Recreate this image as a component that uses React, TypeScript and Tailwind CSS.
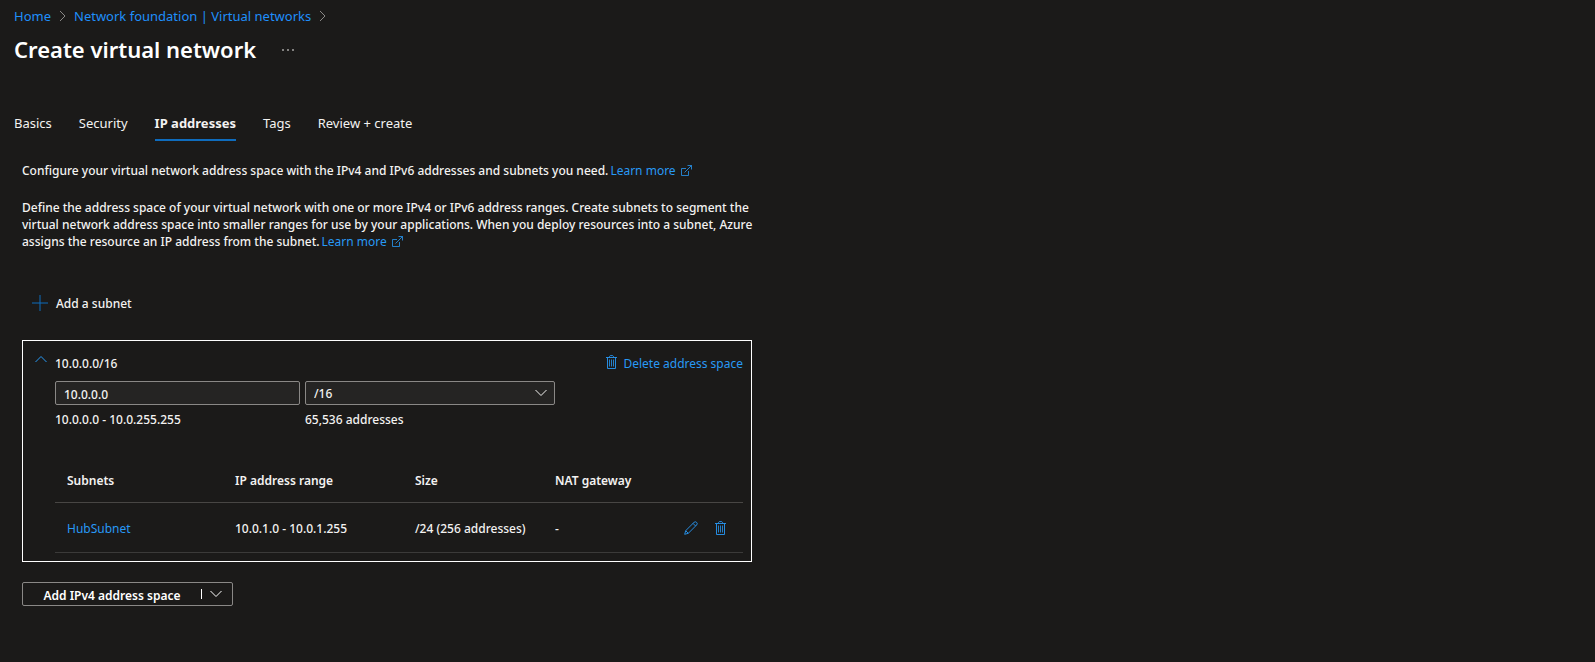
import React from "react";

const stroke = {
  fill: "none",
  stroke: "currentColor",
  strokeLinejoin: "miter" as const,
  "aria-hidden": true,
};

function Chevron({ className = "", d = "M0.5 3 6 8.5 11.5 3" }: { className?: string; d?: string }) {
  return (
    <svg {...stroke} className={className} width="12" height="12" viewBox="0 0 12 12">
      <path d={d} />
    </svg>
  );
}

function BreadcrumbArrow() {
  return (
    <svg {...stroke} className="text-[#8a8886]" width="7" height="12" viewBox="0 0 7 12">
      <path d="M1 1 6 6 1 11" />
    </svg>
  );
}

function ExternalIcon() {
  return (
    <svg {...stroke} className="ml-[5px] inline-block align-[-1px]" width="11" height="11" viewBox="0 0 11 11" strokeWidth="0.8">
      <path d="M5 3.5H.5v7h7V6" />
      <path d="M3.5 7.5 10.5.5M6.5.5h4v4" />
    </svg>
  );
}

function TrashIcon({ className = "" }: { className?: string }) {
  return (
    <svg {...stroke} className={className} width="11" height="14" viewBox="0 0 11 14" strokeWidth="0.9">
      <path d="M0 2.5h11M3.5 2.5V1.5l.8-.9h2.4l.8.9v1M1.5 2.5v11h8v-11" />
      <path d="M3.5 4.5v7M5.5 4.5v7M7.5 4.5v7" strokeWidth="0.8" />
    </svg>
  );
}

function PencilIcon() {
  return (
    <svg {...stroke} width="14" height="14" viewBox="0 0 14 14" strokeWidth="0.9">
      <path d="M0.7 13.3 1.7 9.7 10 1.4a1.8 1.8 0 0 1 2.6 2.6L4.3 12.3z" />
      <path d="M9 2.4l2.6 2.6M1.7 9.7l2.6 2.6" />
    </svg>
  );
}

function LearnMore() {
  return (
    <a href="#learn" className="ml-0.5 font-normal whitespace-nowrap text-[#2899f5]">
      Learn more
      <ExternalIcon />
    </a>
  );
}

const tabs = ["Basics", "Security", "IP addresses", "Tags", "Review + create"];

const subnets = [{ name: "HubSubnet", range: "10.0.1.0 - 10.0.1.255", size: "/24 (256 addresses)", nat: "-" }];

export default function App() {
  return (
    <div className="min-h-screen bg-[#1b1a19] font-['Noto_Sans','Open_Sans',sans-serif] text-[12px] leading-[17px] text-[#f3f2f1]">
      <header className="px-3.5 pt-1.5">
        <nav aria-label="Breadcrumb" className="flex h-5 items-center gap-2 text-[13px] text-[#1f8ffb]">
          <a href="#home">Home</a>
          <BreadcrumbArrow />
          <a href="#networks">Network foundation | Virtual networks</a>
          <BreadcrumbArrow />
        </nav>
        <div className="mt-[7px] flex h-8 items-center gap-[26px]">
          <h1 className="text-[22px] font-semibold text-white">Create virtual network</h1>
          <button type="button" aria-label="More options" className="flex gap-[3px] pt-0.5 text-[#c8c6c4]">
            <span className="size-0.5 bg-current opacity-60" />
            <span className="size-0.5 bg-current opacity-60" />
            <span className="size-0.5 bg-current opacity-60" />
          </button>
        </div>
      </header>

      <div role="tablist" className="mt-[50px] flex gap-[27px] px-3.5 text-[13px]">
        {tabs.map((tab) => {
          const active = tab === "IP addresses";
          return (
            <button
              key={tab}
              type="button"
              role="tab"
              aria-selected={active}
              className={`border-b-2 pb-[7px] ${active ? "border-[#0f6cbd] font-bold" : "border-transparent"}`}
            >
              {tab}
            </button>
          );
        })}
      </div>

      <main className="ml-[22px] w-[730px] max-w-full pb-10 font-medium">
        <p className="mt-[21px]">
          Configure your virtual network address space with the IPv4 and IPv6 addresses and subnets you need.
          <LearnMore />
        </p>
        <p className="mt-5 -mr-2">
          Define the address space of your virtual network with one or more IPv4 or IPv6 address ranges. Create subnets to segment the
          virtual network address space into smaller ranges for use by your applications. When you deploy resources into a subnet, Azure
          assigns the resource an IP address from the subnet.
          <LearnMore />
        </p>

        <button type="button" className="mt-[45px] ml-2.5 flex items-start gap-2">
          <svg {...stroke} className="text-[#0f6cbd]" width="16" height="16" viewBox="0 0 16 16">
            <path d="M8 0v16M0 8h16" />
          </svg>
          Add a subnet
        </button>

        <section className="mt-7 border border-white pt-3.5 pr-2 pb-2 pl-8">
          <div className="-ml-5 flex h-[17px] items-center">
            <button type="button" aria-label="Collapse address space" className="mr-2 pb-1.5 text-[#2899f5]">
              <Chevron d="M0.5 7 6 1.5 11.5 7" />
            </button>
            <span>10.0.0.0/16</span>
            <button type="button" className="ml-auto flex items-start gap-1.5 font-normal text-[#2899f5]">
              <TrashIcon />
              Delete address space
            </button>
          </div>

          <div className="mt-[9px] flex gap-[5px]">
            <div className="w-[245px]">
              <input
                aria-label="Starting address"
                defaultValue="10.0.0.0"
                className="block h-6 w-full rounded-xs border border-[#8a8886] bg-[#252423] px-2 pt-0.5"
              />
              <p className="mt-1.5">10.0.0.0 - 10.0.255.255</p>
            </div>
            <div className="w-[250px]">
              <div className="relative">
                <select
                  aria-label="Address space size"
                  defaultValue="/16"
                  className="block h-6 w-full appearance-none rounded-xs border border-[#8a8886] bg-[#252423] px-2"
                >
                  <option>/16</option>
                  <option>/24</option>
                </select>
                <Chevron className="pointer-events-none absolute top-1.5 right-2" />
              </div>
              <p className="mt-1.5">65,536 addresses</p>
            </div>
          </div>

          <table className="mt-7 w-full table-fixed text-left">
            <colgroup>
              <col className="w-[180px]" />
              <col className="w-[180px]" />
              <col className="w-[140px]" />
              <col />
              <col className="w-[72px]" />
            </colgroup>
            <thead>
              <tr className="h-[46px] border-b border-[#484644]">
                <th className="pt-1 pl-3 font-semibold">Subnets</th>
                <th className="pt-1 font-semibold">IP address range</th>
                <th className="pt-1 font-semibold">Size</th>
                <th className="pt-1 font-semibold">NAT gateway</th>
                <th aria-label="Actions" />
              </tr>
            </thead>
            <tbody>
              {subnets.map((subnet) => (
                <tr key={subnet.name} className="h-[50px] border-b border-[#3b3a39]">
                  <td className="pt-0.5 pl-3">
                    <a href="#subnet" className="font-normal text-[#2899f5]">
                      {subnet.name}
                    </a>
                  </td>
                  <td className="pt-0.5">{subnet.range}</td>
                  <td className="pt-0.5">{subnet.size}</td>
                  <td className="pt-0.5">{subnet.nat}</td>
                  <td className="pt-0.5">
                    <div className="flex items-center justify-end gap-[17px] pr-[17px] text-[#2899f5]">
                      <button type="button" aria-label="Edit subnet">
                        <PencilIcon />
                      </button>
                      <button type="button" aria-label="Delete subnet">
                        <TrashIcon />
                      </button>
                    </div>
                  </td>
                </tr>
              ))}
            </tbody>
          </table>
        </section>

        <div className="mt-5 flex h-6 w-[211px] items-center rounded-xs border border-[#8a8886] text-white">
          <button type="button" className="flex-1 pt-[3px] text-center font-semibold">
            Add IPv4 address space
          </button>
          <button type="button" aria-label="More address space options" className="flex items-center">
            <span className="h-2.5 w-px bg-white" />
            <Chevron className="mr-2.5 ml-2" />
          </button>
        </div>
      </main>
    </div>
  );
}
